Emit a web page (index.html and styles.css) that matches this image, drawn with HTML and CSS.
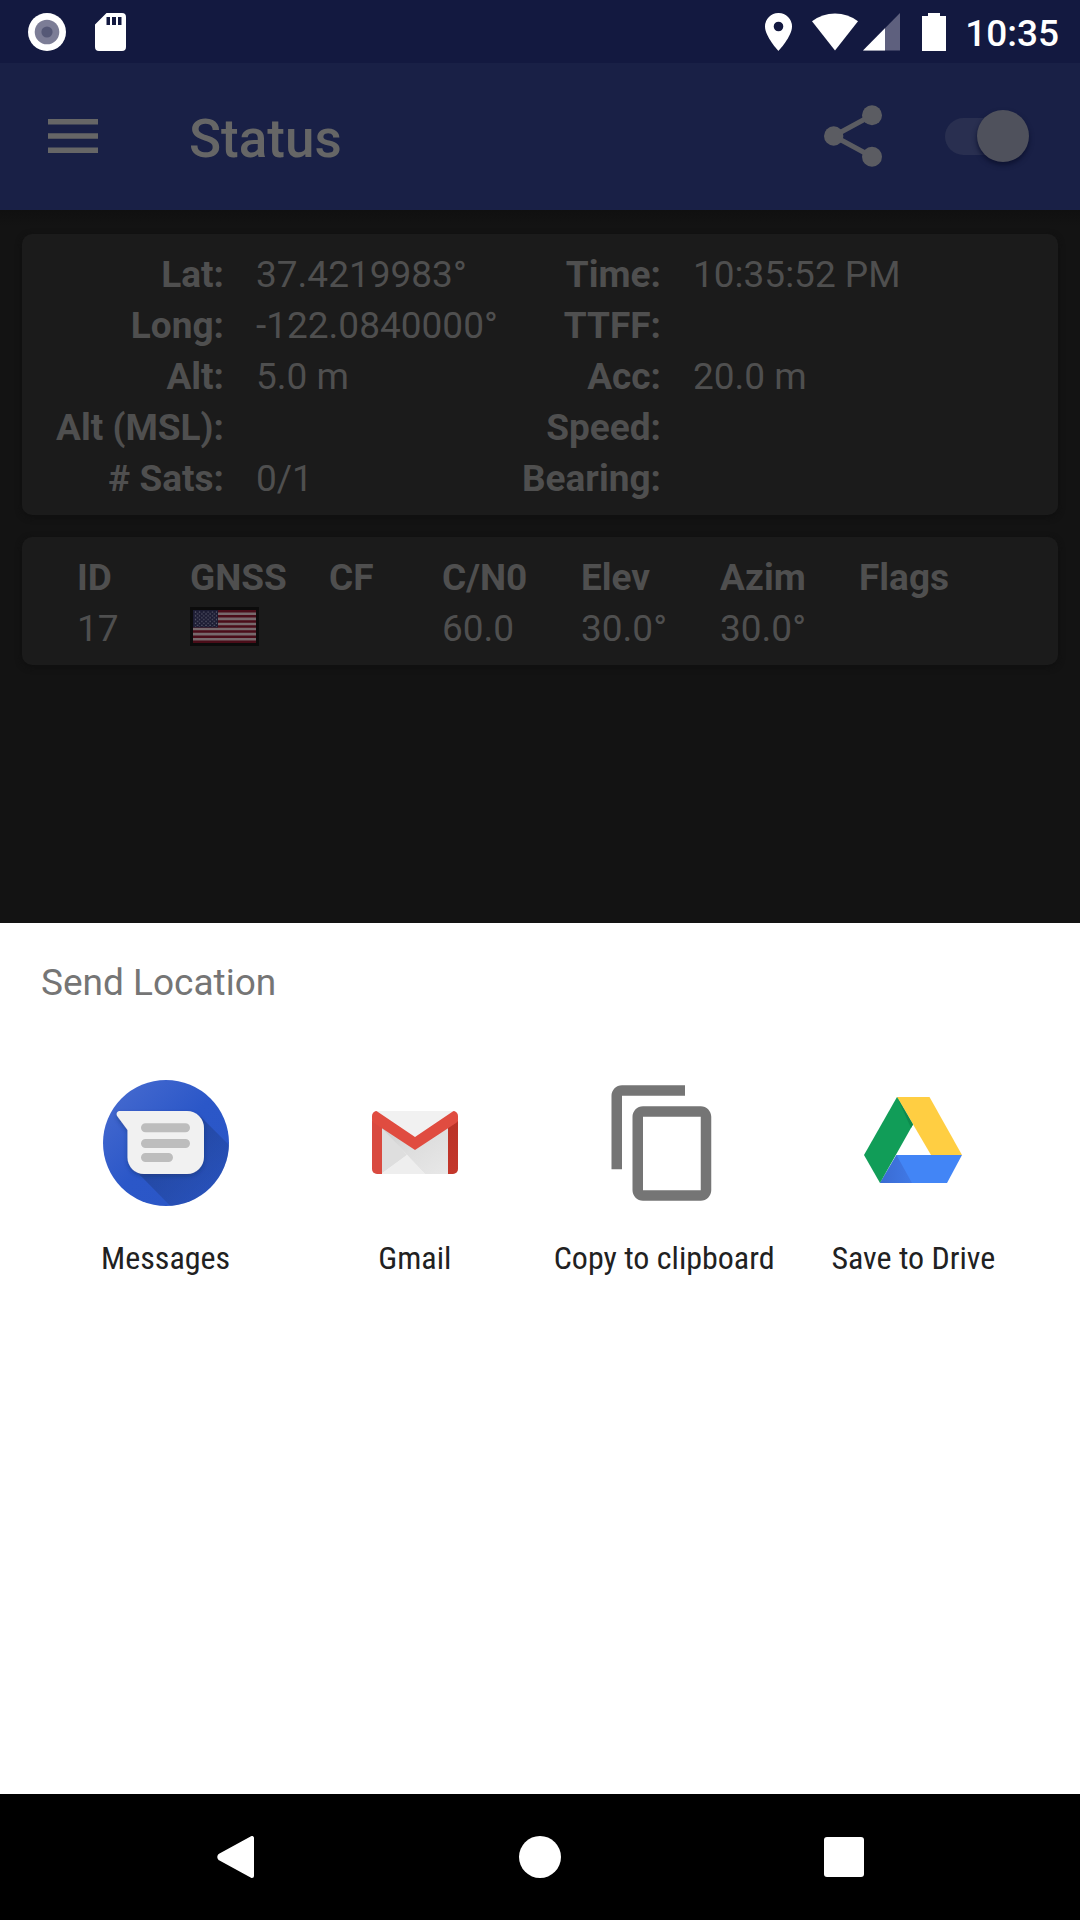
FILE: index.html
```html
<!DOCTYPE html>
<html lang="en">
<head>
<meta charset="utf-8">
<meta name="viewport" content="width=device-width, initial-scale=1">
<title>Status</title>
<link rel="stylesheet" href="styles.css">
</head>
<body>
<div class="screen">
  <div class="status-bar">
    <div class="notifications">
      <svg width="38" height="38" viewBox="0 0 38 38" aria-hidden="true"><circle cx="19" cy="19" r="19" fill="#fff"/><circle cx="19" cy="19" r="12.3" fill="#7c7d96"/><circle cx="19" cy="19" r="5.6" fill="#555876"/></svg>
      <svg width="31" height="38" viewBox="0 0 31 38" aria-hidden="true"><path fill="#fff" fill-rule="evenodd" d="M11.500 0H27a4 4 0 0 1 4 4v30a4 4 0 0 1-4 4H4a4 4 0 0 1-4-4V11.500zM11.500 4v8h3.500V4zM17 4v8h4V4zM23 4v8h3.500V4z"/></svg>
    </div>
    <div class="indicators">
      <svg width="27" height="38" viewBox="0 0 27 38" aria-hidden="true"><path fill="#fff" fill-rule="evenodd" d="M13.500 0A13.400 13.400 0 0 0 0 13.500C0 23.500 13.500 38 13.500 38S27 23.500 27 13.500A13.400 13.400 0 0 0 13.500 0zm0 8.700a4.800 4.800 0 1 1 0 9.600 4.800 4.800 0 0 1 0-9.600z"/></svg>
      <svg class="wifi" width="46" height="38" viewBox="0 0 46 38" aria-hidden="true"><path fill="#fff" d="M0 8.300A38 38 0 0 1 46 8.300L23 37.500z"/></svg>
      <svg class="signal" width="37" height="38" viewBox="0 0 37 38" aria-hidden="true"><path fill="#5e607e" d="M37 0v37.500H0z"/><path fill="#fff" d="M22 15.200v22.300H0z"/></svg>
      <svg class="battery" width="24" height="38" viewBox="0 0 24 38" aria-hidden="true"><path fill="#fff" d="M6 0h12v3h6v35H0V3h6z"/></svg>
      <time class="clock">10:35</time>
    </div>
  </div>

  <header class="app-bar">
    <button class="icon-button" type="button" aria-label="Open menu">
      <svg width="50" height="36" viewBox="0 0 50 36" aria-hidden="true"><path fill="#666" d="M0 0h50v5.500H0zM0 14.200h50v5.500H0zM0 28.500h50v5.500H0z"/></svg>
    </button>
    <h1 class="title">Status</h1>
    <button class="icon-button" type="button" aria-label="Share">
      <svg width="58" height="64" viewBox="0 0 58 64" aria-hidden="true"><path fill="none" stroke="#5b5c62" stroke-width="5" d="M48 10.300L9.700 31 48 51.700"/><g fill="#5b5c62"><circle cx="48" cy="10.300" r="10"/><circle cx="9.700" cy="31" r="9.700"/><circle cx="48" cy="51.700" r="10"/></g></svg>
    </button>
    <input class="switch" type="checkbox" role="switch" aria-label="Location updates" checked>
  </header>

  <main class="content">
    <dl class="card location">
      <dt>Lat:</dt><dd>37.4219983°</dd><dt>Time:</dt><dd>10:35:52 PM</dd>
      <dt>Long:</dt><dd>-122.0840000°</dd><dt>TTFF:</dt><dd></dd>
      <dt>Alt:</dt><dd>5.0 m</dd><dt>Acc:</dt><dd>20.0 m</dd>
      <dt>Alt (MSL):</dt><dd></dd><dt>Speed:</dt><dd></dd>
      <dt># Sats:</dt><dd>0/1</dd><dt>Bearing:</dt><dd></dd>
    </dl>
    <div class="card">
      <table class="satellites">
        <colgroup><col class="narrow"><col class="wide"><col class="narrow"><col class="wide"><col class="wide"><col class="wide"><col></colgroup>
        <thead>
          <tr><th>ID</th><th>GNSS</th><th>CF</th><th>C/N0</th><th>Elev</th><th>Azim</th><th>Flags</th></tr>
        </thead>
        <tbody>
          <tr>
            <td>17</td>
            <td>
              <svg class="flag" width="69" height="39" viewBox="0 0 69 39" role="img" aria-label="United States">
                <defs>
                  <pattern id="stars" width="4.200" height="3.800" patternUnits="userSpaceOnUse"><circle cx="1.300" cy="1.100" r=".7" fill="#666677"/><circle cx="3.400" cy="3" r=".7" fill="#666677"/></pattern>
                </defs>
                <path fill="#0c0c0c" d="M0 0h69v39H0z"/>
                <path fill="#77696c" d="M3 3h63v33H3z"/>
                <path stroke="#4b0d19" stroke-width="2.540" d="M3 4.270h63M3 9.350h63M3 14.420h63M3 19.500h63M3 24.580h63M3 29.650h63M3 34.730h63"/>
                <path fill="#1c1c33" d="M3 3h25v17.500H3z"/>
                <path fill="url(#stars)" d="M4 4h23v16H4z"/>
              </svg>
            </td>
            <td></td><td>60.0</td><td>30.0°</td><td>30.0°</td><td></td>
          </tr>
        </tbody>
      </table>
    </div>
  </main>

  <section class="sheet" aria-labelledby="sheet-title">
    <h2 class="sheet-title" id="sheet-title">Send Location</h2>
    <div class="targets">
      <button class="target" type="button">
        <svg width="126" height="126" viewBox="0 0 126 126" aria-hidden="true">
          <defs>
            <linearGradient id="disc" x1="0" y1="0" x2="1" y2="1"><stop offset="0" stop-color="#4a6dd0"/><stop offset=".5" stop-color="#2b57c8"/><stop offset="1" stop-color="#2a56c6"/></linearGradient>
            <linearGradient id="long-shadow" x1="0" y1="0" x2="1" y2="1"><stop offset=".2" stop-color="#1f3f8c" stop-opacity=".7"/><stop offset=".7" stop-color="#1f3f8c" stop-opacity=".2"/></linearGradient>
            <clipPath id="disc-clip"><circle cx="63" cy="63" r="63"/></clipPath>
            <filter id="soft" x="-20%" y="-20%" width="140%" height="150%"><feDropShadow dx="0" dy="2" stdDeviation="2" flood-color="#132b66" flood-opacity=".45"/></filter>
          </defs>
          <circle cx="63" cy="63" r="63" fill="url(#disc)"/>
          <path clip-path="url(#disc-clip)" fill="url(#long-shadow)" d="M98 37l50 50v60H88L33 91z"/>
          <path filter="url(#soft)" fill="#f1f1f1" d="M17 31h67a17 17 0 0 1 17 17v29a17 17 0 0 1-17 17H41a16.500 16.500 0 0 1-16.500-16.500V50L14.500 36.500C12.600 33.500 14 31 17 31z"/>
          <path stroke="#bdbdbd" stroke-width="9" stroke-linecap="round" d="M42.500 47.700h40M42.500 63.500h40M42.500 77.500h23"/>
        </svg>
        <span class="target-label">Messages</span>
      </button>
      <button class="target" type="button">
        <svg width="126" height="126" viewBox="0 0 126 126" aria-hidden="true">
          <defs>
            <linearGradient id="fold" x1="0" y1="0" x2="1" y2="1"><stop offset="0" stop-color="#cbcbcb"/><stop offset=".5" stop-color="#dedede"/><stop offset="1" stop-color="#e8e8e8"/></linearGradient>
            <linearGradient id="right-edge" x1="0" y1="0" x2="0" y2="1"><stop offset="0" stop-color="#b93227"/><stop offset="1" stop-color="#c4372b"/></linearGradient>
            <clipPath id="envelope"><rect x="20" y="31" width="86" height="63" rx="5"/></clipPath>
          </defs>
          <g clip-path="url(#envelope)">
            <path fill="#f1f1f1" d="M20 31h86v63H20z"/>
            <path fill="#dedede" d="M29 46v48l26-19z"/>
            <path fill="url(#fold)" d="M26 44l37 26 34-24v48H73z"/>
            <path fill="#eee" d="M29 94l26-19 18 19z"/>
            <path fill="#d94a40" d="M20 40l10 7v47H20z"/>
            <path fill="url(#right-edge)" d="M106 40l-10 7v47h10z"/>
            <path fill="#e04c40" d="M20 31h4.500L63 57l38.500-26h4.500v9q0 2-2 3L63 70 22 43q-2-1-2-3z"/>
          </g>
        </svg>
        <span class="target-label">Gmail</span>
      </button>
      <button class="target" type="button">
        <svg width="126" height="126" viewBox="0 0 24 24" aria-hidden="true"><path fill="#757575" d="M16 1H4c-1.100 0-2 .9-2 2v14h2V3h12V1zm3 4H8c-1.100 0-2 .9-2 2v14c0 1.100.9 2 2 2h11c1.100 0 2-.9 2-2V7c0-1.100-.9-2-2-2zm0 16H8V7h11v14z"/></svg>
        <span class="target-label">Copy to clipboard</span>
      </button>
      <button class="target" type="button">
        <svg width="126" height="126" viewBox="0 0 126 126" aria-hidden="true">
          <defs>
            <linearGradient id="blue-shade" x1="0" y1="0" x2="1" y2="0"><stop offset="0" stop-color="#3a6bd2"/><stop offset="1" stop-color="#4079e6"/></linearGradient>
          </defs>
          <path fill="#ffce42" d="M47 17h32.500L112 75H81z"/>
          <path fill="#4285f6" d="M46.500 75H112l-15 28H30z"/>
          <path fill="url(#blue-shade)" d="M46.500 75L62 103H30z"/>
          <path fill="#119d58" d="M47 17l16 27.500L30 103 14 75z"/>
          <path fill="#0e8a4d" d="M47 17l16 27.500-2 3.500z"/>
        </svg>
        <span class="target-label">Save to Drive</span>
      </button>
    </div>
  </section>

  <nav class="nav-bar" aria-label="System">
    <button class="nav-button" type="button" aria-label="Back"><svg width="42" height="42" viewBox="0 0 42 42" aria-hidden="true"><path fill="#fff" stroke="#fff" stroke-width="4" stroke-linejoin="round" d="M37 2v38L5 22.500q-1.500-1.500 0-3z"/></svg></button>
    <button class="nav-button" type="button" aria-label="Home"><svg width="42" height="42" viewBox="0 0 42 42" aria-hidden="true"><circle cx="21" cy="21" r="21" fill="#fff"/></svg></button>
    <button class="nav-button" type="button" aria-label="Recent apps"><svg width="42" height="42" viewBox="0 0 42 42" aria-hidden="true"><rect x="1" y="1" width="40" height="40" rx="3" fill="#fff"/></svg></button>
  </nav>
</div>
</body>
</html>
```
FILE: styles.css
```css
* {
  box-sizing: border-box;
}

body {
  margin: 0;
  background: #131313;
  font-family: Roboto, "Liberation Sans", sans-serif;
  font-size: 37px;
}

svg {
  display: block;
  flex: none;
}

button {
  padding: 0;
  border: 0;
  background: none;
  font: inherit;
  color: inherit;
}

.screen {
  display: grid;
  grid-template-rows: auto auto 45fr 55fr auto;
  min-height: 100vh;
}

/* System status bar */
.status-bar {
  display: flex;
  align-items: center;
  justify-content: space-between;
  height: 63px;
  padding: 0 21px 0 28px;
  background: #131940;
  color: #fff;
}

.notifications {
  display: flex;
  gap: 29px;
}

.indicators {
  display: flex;
  align-items: center;
}

.wifi {
  margin-left: 20px;
}

.signal {
  margin-left: 5px;
}

.battery {
  margin-left: 22px;
}

.clock {
  margin-left: 19px;
  padding-top: 4px;
  font-weight: 500;
}

/* App bar */
.app-bar {
  display: flex;
  align-items: center;
  height: 147px;
  padding: 0 51px 0 48px;
  background: #192046;
  color: #666;
}

.title {
  flex: 1;
  margin: 0;
  padding: 4px 0 0 91px;
  font-size: 53px;
  font-weight: 500;
}

.switch {
  position: relative;
  width: 84px;
  height: 54px;
  margin: 0 0 0 63px;
  appearance: none;
}

.switch::before {
  content: "";
  position: absolute;
  inset: 8px 4px 9px 0;
  border-radius: 20px;
  background: #292f50;
}

.switch::after {
  content: "";
  position: absolute;
  top: 0;
  right: 0;
  width: 52px;
  height: 52px;
  border-radius: 50%;
  background: #4f515c;
  box-shadow: 0 3px 5px #0d1230;
}

/* Cards */
.content {
  display: flex;
  flex-direction: column;
  gap: 22px;
  padding: 24px 22px;
  background: linear-gradient(#101010, #131313 16px);
  color: #4f4f4f;
  line-height: 51px;
}

.card {
  margin: 0;
  padding: 15px 0 11px;
  border-radius: 10px;
  background: #1b1b1b;
  box-shadow: 0 2px 6px #0f0f0f;
}

.location {
  display: grid;
  grid-template-columns: 234px 1fr auto 365px;
  grid-auto-rows: 51px;
}

.location dt {
  padding-right: 32px;
  font-weight: 700;
  text-align: right;
}

.location dd {
  margin: 0;
}

.satellites {
  width: 100%;
  padding-left: 55px;
  border-spacing: 0;
  table-layout: fixed;
  text-align: left;
}

.satellites th,
.satellites td {
  height: 51px;
  padding: 0;
}

.flag {
  margin-bottom: 4px;
}

.narrow {
  width: 113px;
}

.wide {
  width: 139px;
}

/* Share sheet */
.sheet {
  padding: 36px 42px 36px 41px;
  background: #fff;
}

.sheet-title {
  margin: 0;
  color: #757575;
  font-size: 37px;
  font-weight: 400;
  line-height: 48px;
}

.targets {
  display: grid;
  grid-template-columns: repeat(4, 1fr);
  margin-top: 73px;
}

.target {
  display: flex;
  flex-direction: column;
  align-items: center;
  gap: 32px;
}

.target-label {
  color: #212121;
  font-family: "Roboto Condensed", Roboto, "Liberation Sans", sans-serif;
  font-size: 32px;
  line-height: 40px;
  white-space: nowrap;
}

/* System navigation */
.nav-bar {
  display: grid;
  grid-template-columns: repeat(3, 1fr);
  height: 126px;
  padding: 0 84px;
  background: #000;
}

.nav-button {
  display: grid;
  place-items: center;
}
```
